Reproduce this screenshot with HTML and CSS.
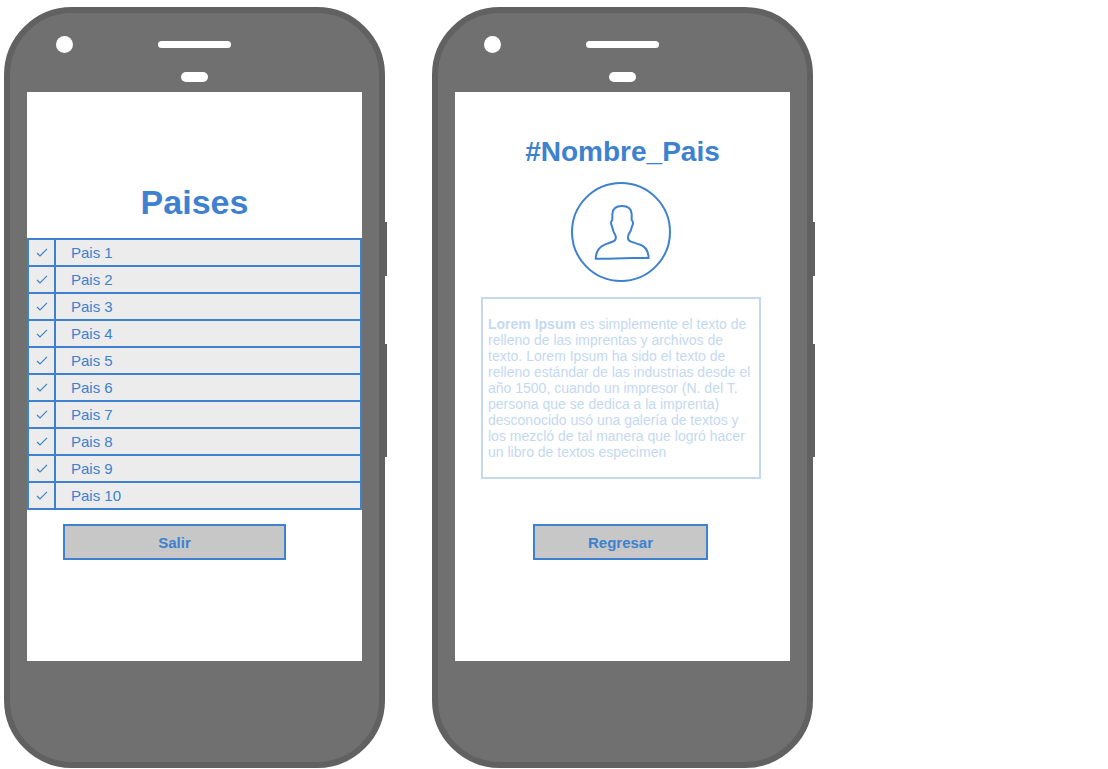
FILE: index.html
```
<!DOCTYPE html>
<html lang="es">
<head>
<meta charset="utf-8">
<meta name="viewport" content="width=device-width, initial-scale=1">
<title>Paises</title>
<link rel="stylesheet" href="styles.css">
</head>
<body>
<svg class="defs" aria-hidden="true">
  <symbol id="check" viewBox="0 0 12 12"><path d="M1 6 L4 9 L11 1.8"/></symbol>
</svg>
<main class="board">
  <section class="phone">
    <div class="hardware"><span class="camera"></span><span class="speaker"></span><span class="sensor"></span></div>
    <div class="screen">
      <h1 class="title title-list">Paises</h1>
      <table class="countries">
        <tbody>
          <tr><td class="mark"><svg class="tick"><use href="#check"/></svg></td><td class="name">Pais 1</td></tr>
          <tr><td class="mark"><svg class="tick"><use href="#check"/></svg></td><td class="name">Pais 2</td></tr>
          <tr><td class="mark"><svg class="tick"><use href="#check"/></svg></td><td class="name">Pais 3</td></tr>
          <tr><td class="mark"><svg class="tick"><use href="#check"/></svg></td><td class="name">Pais 4</td></tr>
          <tr><td class="mark"><svg class="tick"><use href="#check"/></svg></td><td class="name">Pais 5</td></tr>
          <tr><td class="mark"><svg class="tick"><use href="#check"/></svg></td><td class="name">Pais 6</td></tr>
          <tr><td class="mark"><svg class="tick"><use href="#check"/></svg></td><td class="name">Pais 7</td></tr>
          <tr><td class="mark"><svg class="tick"><use href="#check"/></svg></td><td class="name">Pais 8</td></tr>
          <tr><td class="mark"><svg class="tick"><use href="#check"/></svg></td><td class="name">Pais 9</td></tr>
          <tr><td class="mark"><svg class="tick"><use href="#check"/></svg></td><td class="name">Pais 10</td></tr>
        </tbody>
      </table>
      <button type="button" class="button button-exit">Salir</button>
    </div>
  </section>

  <section class="phone">
    <div class="hardware"><span class="camera"></span><span class="speaker"></span><span class="sensor"></span></div>
    <div class="screen">
      <h2 class="title title-detail">#Nombre_Pais</h2>
      <div class="detail">
        <svg class="avatar" viewBox="0 0 300 300" aria-hidden="true">
          <circle cx="150" cy="150" r="147"/>
          <path d="M74 230 C75 206 86 193 103 187 L122 180 C133 177 136 172 134 163 C133 156 126 151 125 140 C124 133 120 131 120 122 C120 117 124 118 124 112 L124 96 C125 80 137 72 153 72 C169 72 181 80 182 96 L182 112 C182 118 186 117 186 122 C186 131 182 133 181 140 C180 149 174 152 172 160 C169 170 172 176 180 179 L204 187 C222 192 232 205 233 228 L184 228 L109 230 Z"/>
        </svg>
        <p class="description"><strong>Lorem Ipsum</strong> es simplemente el texto de relleno de las imprentas y archivos de texto. Lorem Ipsum ha sido el texto de relleno estándar de las industrias desde el año 1500, cuando un impresor (N. del T. persona que se dedica a la imprenta) desconocido usó una galería de textos y los mezcló de tal manera que logró hacer un libro de textos especimen</p>
        <button type="button" class="button button-back">Regresar</button>
      </div>
    </div>
  </section>
</main>
</body>
</html>
```
FILE: styles.css
```
:root {
  --blue: #3d81cf;
  --pale: #c4d9f1;
  --shell: #707070;
  --edge: #616161;
}

* { box-sizing: border-box; }

body {
  margin: 0;
  background: #fff;
  color: var(--blue);
  font: 15px/17px "Liberation Sans", Arial, sans-serif;
}

.defs { display: none; }

.board {
  display: flex;
  flex-wrap: wrap;
  align-items: flex-start;
  gap: 47px;
  padding: 7px 4px 0;
}

.phone {
  position: relative;
  flex: 0 1 381px;
  padding: 0 17px 101px;
  background: var(--shell);
  border: 6px solid var(--edge);
  border-radius: 68px;
}

.phone::before,
.phone::after {
  content: "";
  position: absolute;
  right: -8px;
  width: 2px;
  background: var(--edge);
}

.phone::before { top: 209px; height: 54px; }
.phone::after { top: 331px; height: 113px; }

.hardware {
  display: grid;
  grid-template-columns: 1fr auto 1fr;
  grid-template-rows: 17px 10px;
  row-gap: 19px;
  align-items: center;
  justify-items: center;
  padding: 23px 0 10px;
}

.camera,
.speaker,
.sensor {
  background: #fff;
  border-radius: 9px;
}

.camera {
  width: 17px;
  height: 17px;
  margin-left: 29px;
  justify-self: start;
}

.speaker { width: 73px; height: 7px; }
.sensor { grid-column: 2; width: 27px; height: 10px; }

.screen {
  display: flex;
  flex-direction: column;
  min-height: 569px;
  background: #fff;
}

.title {
  margin: 0;
  text-align: center;
  font-weight: bold;
}

.title-list {
  padding: 90px 0 16px;
  font-size: 34px;
  line-height: 40px;
}

.title-detail {
  padding: 44px 0 14px;
  font-size: 28px;
  line-height: 32px;
}

.countries {
  width: 100%;
  border-collapse: collapse;
  background: #ececec;
}

.countries td {
  height: 27px;
  padding: 0;
  border: 2px solid var(--blue);
}

.countries .mark { width: 27px; }
.countries .name { padding-left: 15px; }

.tick {
  display: block;
  width: 12px;
  height: 12px;
  margin: 0 auto;
  fill: none;
  stroke: var(--blue);
  stroke-width: 1.2;
}

.button {
  height: 36px;
  padding: 0;
  border: 2px solid var(--blue);
  border-radius: 0;
  background: #c7c7c7;
  color: var(--blue);
  font: bold 15px/17px "Liberation Sans", Arial, sans-serif;
}

.button-exit { margin: 14px 76px 0 36px; }

.detail {
  display: flex;
  flex-direction: column;
  padding: 0 29px 0 26px;
}

.avatar {
  align-self: center;
  width: 100px;
  height: 100px;
  fill: none;
  stroke: var(--blue);
  stroke-width: 6;
  stroke-linejoin: round;
}

.description {
  margin: 15px 0 45px;
  padding: 17px 5px;
  border: 2px solid var(--pale);
  color: var(--pale);
  font-size: 14px;
  line-height: 16px;
}

.button-back { margin: 0 53px 0 52px; }
```
